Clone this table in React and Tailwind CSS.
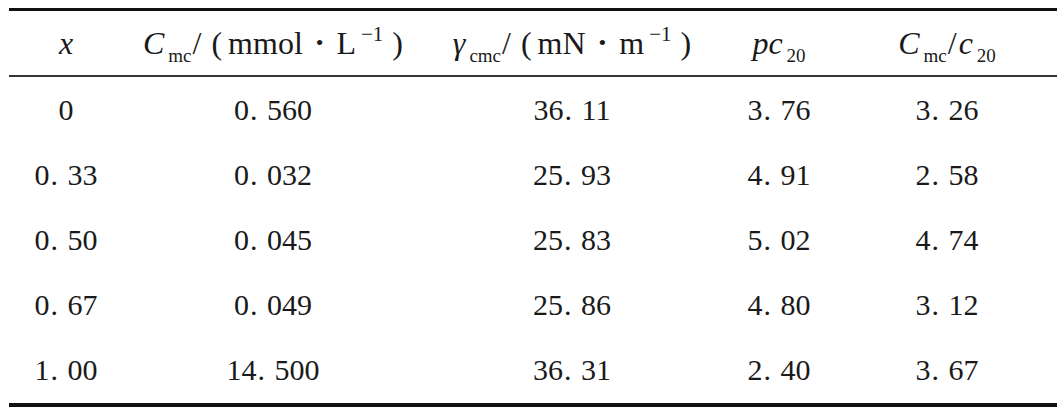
import React from "react";

const rows = [
  ["0", "0.560", "36.11", "3.76", "3.26"],
  ["0.33", "0.032", "25.93", "4.91", "2.58"],
  ["0.50", "0.045", "25.83", "5.02", "4.74"],
  ["0.67", "0.049", "25.86", "4.80", "3.12"],
  ["1.00", "14.500", "36.31", "2.40", "3.67"],
];

const cols = ["w-[114px]", "w-[300px]", "w-[298px]", "w-[116px]", "w-[220px]"];

function Num({ v }) {
  const parts = v.split(".");
  if (parts.length === 1) return <span>{v}</span>;
  return (
    <span className="inline-flex items-baseline">
      <span>{parts[0]}</span>
      <span className="inline-block w-[18px] pl-[1px] text-left">.</span>
      <span>{parts[1]}</span>
    </span>
  );
}

function Sub({ children }) {
  return (
    <span className="not-italic text-[19px] relative top-[8px] ml-[4px]">{children}</span>
  );
}

function Sup({ children }) {
  return (
    <span className="not-italic text-[21px] relative top-[-13px] ml-[5px]">{children}</span>
  );
}

export default function App() {
  return (
    <div className="w-[1064px] h-[416px] bg-white pt-[8px] pl-[9px] text-[#1a1a1a] font-['Liberation_Serif',serif]">
      <div className="w-[1048px] border-t-[3px] border-b-[4px] border-[#111]">
        <div className="flex h-[66px] items-center border-b-2 border-[#333] text-[32px] leading-none">
          <div className={`${cols[0]} flex justify-center`}>
            <span className="italic">x</span>
          </div>
          <div className={`${cols[1]} flex justify-center`}>
            <span className="whitespace-nowrap">
              <span className="italic">C</span>
              <Sub>mc</Sub>
              <span className="ml-[1px]">/</span>
              <span className="ml-[10px] mr-[6px]">(</span>
              <span>mmol</span>
              <span className="mx-[13px] text-[22px] relative top-[-4px]">•</span>
              <span>L</span>
              <Sup>−1</Sup>
              <span className="ml-[9px]">)</span>
            </span>
          </div>
          <div className={`${cols[2]} flex justify-center`}>
            <span className="whitespace-nowrap">
              <span className="italic">γ</span>
              <Sub>cmc</Sub>
              <span className="ml-[1px]">/</span>
              <span className="ml-[10px] mr-[6px]">(</span>
              <span>mN</span>
              <span className="mx-[13px] text-[22px] relative top-[-4px]">•</span>
              <span>m</span>
              <Sup>−1</Sup>
              <span className="ml-[9px]">)</span>
            </span>
          </div>
          <div className={`${cols[3]} flex justify-center`}>
            <span className="whitespace-nowrap">
              <span className="italic">pc</span>
              <Sub>20</Sub>
            </span>
          </div>
          <div className={`${cols[4]} flex justify-center`}>
            <span className="whitespace-nowrap">
              <span className="italic">C</span>
              <Sub>mc</Sub>
              <span className="ml-[1px]">/</span>
              <span className="italic ml-[2px]">c</span>
              <Sub>20</Sub>
            </span>
          </div>
        </div>
        {rows.map((r, i) => (
          <div key={i} className="flex h-[65.2px] items-center text-[30px] leading-none">
            {r.map((v, j) => (
              <div key={j} className={`${cols[j]} flex justify-center`}>
                <Num v={v} />
              </div>
            ))}
          </div>
        ))}
      </div>
    </div>
  );
}
